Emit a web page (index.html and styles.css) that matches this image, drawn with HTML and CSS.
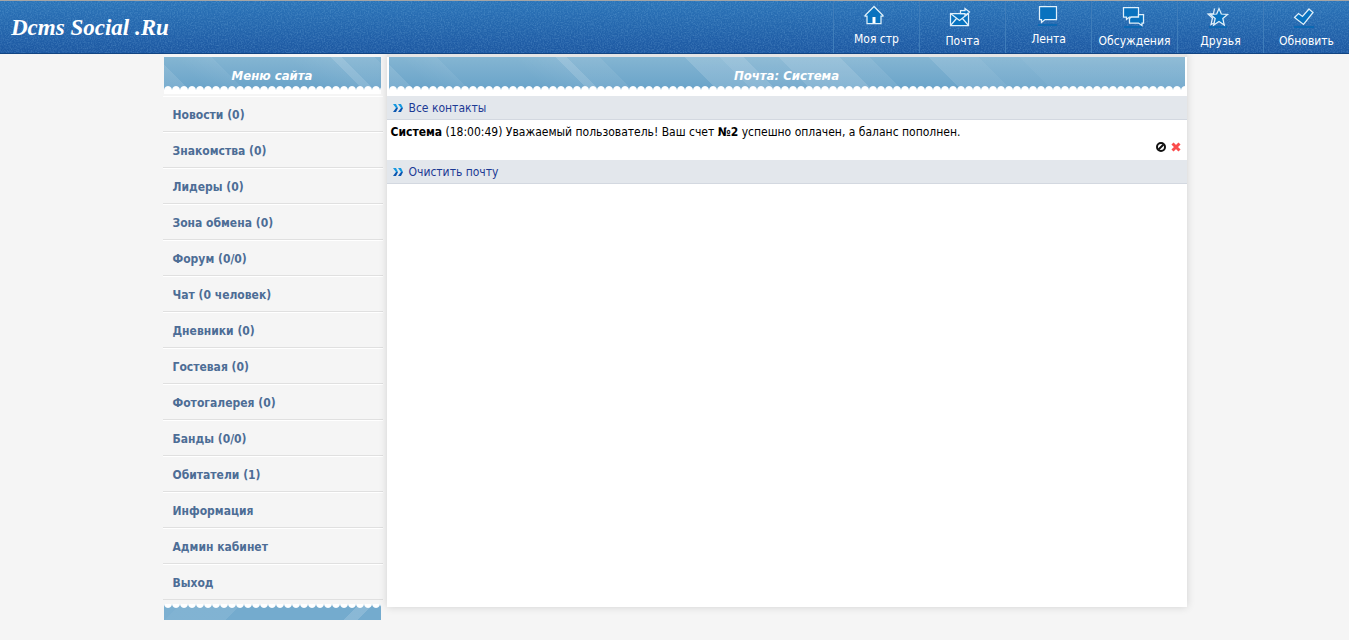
FILE: index.html
```html
<!DOCTYPE html>
<html lang="ru">
<head>
<meta charset="utf-8">
<title>Почта: Система</title>
<link rel="stylesheet" href="styles.css">
</head>
<body>
<header class="topbar">
  <svg class="grain" aria-hidden="true"><filter id="grain"><feTurbulence type="fractalNoise" baseFrequency="0.7" numOctaves="2" seed="4"/><feColorMatrix values="0 0 0 0 .35  0 0 0 0 .65  0 0 0 0 .9  1.6 0 0 0 -.62"/></filter><rect width="100%" height="100%" filter="url(#grain)"/></svg>
  <a class="logo" href="#">Dcms Social .Ru</a>
  <nav class="topnav">
    <a class="tab" href="#"><svg class="icon" viewBox="0 0 24 20"><path class="fill" d="M12 1.500 3 10.500V11h2v7.500h14V11h2v-.5z"/><path class="door" d="M10.500 12h3v6h-3z"/></svg><span>Моя стр</span></a>
    <a class="tab low" href="#"><svg class="icon" viewBox="0 0 24 20"><path class="fill" d="M2.500 6.500h18v12h-18z"/><path class="line" d="m2.500 6.500 9 7 9-7M2.500 18.500l6-7M20.500 18.500l-6-7"/><path class="fill" d="M12.500 3.500h4.500v-2l4.500 3.500-4.500 3.500v-2h-4.500z"/></svg><span>Почта</span></a>
    <a class="tab" href="#"><svg class="icon" viewBox="0 0 24 20"><path class="base" d="M4 20h19"/><path class="fill" d="M5.500 1.500h17v13h-11.500L7.500 17.500v-3h-2z"/></svg><span>Лента</span></a>
    <a class="tab low" href="#"><svg class="icon" viewBox="0 0 24 20"><path class="base" d="M4 20h18"/><path class="fill" d="M3.500 0.500h15v9.500H9.500L6.500 12.500V10h-3z"/><path class="fill" d="M18.500 7.500h5v8.500h-1.500v2.500l-3.500-2.500h-9v-4.500l2-1.500h7z"/></svg><span>Обсуждения</span></a>
    <a class="tab low" href="#"><svg class="icon" viewBox="0 0 24 20"><path class="base" d="M3 20h18"/><path class="line" d="m8.500 1.500-1 5-5.500.5 4.500 4-1.500 6.500 3-1.500"/><path class="fill" d="m13 1.500 2.300 5.500 6.200.500-4.700 4 1.500 6.500-5.300-3.500-5.300 3.500 1.500-6.500L4.500 7.500 10.700 7z"/></svg><span>Друзья</span></a>
    <a class="tab low" href="#"><svg class="icon" viewBox="0 0 24 20"><path class="base" d="M2 20h20"/><path class="fill" d="M17 2 21 5.500 11.500 17.500 2.500 10.500 6.500 6.500 10.500 9.500z"/></svg><span>Обновить</span></a>
  </nav>
</header>
<div class="page">
  <aside class="side">
    <h2 class="banner">Меню сайта</h2>
    <nav class="menu">
      <a href="#">Новости (0)</a>
      <a href="#">Знакомства (0)</a>
      <a href="#">Лидеры (0)</a>
      <a href="#">Зона обмена (0)</a>
      <a href="#">Форум (0/0)</a>
      <a href="#">Чат (0 человек)</a>
      <a href="#">Дневники (0)</a>
      <a href="#">Гостевая (0)</a>
      <a href="#">Фотогалерея (0)</a>
      <a href="#">Банды (0/0)</a>
      <a href="#">Обитатели (1)</a>
      <a href="#">Информация</a>
      <a href="#">Админ кабинет</a>
      <a href="#">Выход</a>
    </nav>
    <div class="side-foot"></div>
  </aside>
  <main class="content">
    <h1 class="banner">Почта: Система</h1>
    <a class="row" href="#"><svg class="chev" viewBox="0 0 10 10"><path class="hi" d="M0 1h3l2 4H3zM5 1h3l2 4H8z"/><path class="lo" d="M0 9h3l2-4H3zM5 9h3l2-4H8z"/></svg>Все контакты</a>
    <article class="message">
      <p><b>Система</b> (18:00:49) Уважаемый пользователь! Ваш счет <b>№2</b> успешно оплачен, а баланс пополнен.</p>
      <div class="actions">
        <button type="button" aria-label="Заблокировать"><svg viewBox="0 0 10 10"><circle class="ban" cx="5" cy="5" r="4"/><path class="ban" d="m2.500 7.500 5-5"/></svg></button>
        <button type="button" aria-label="Удалить"><svg viewBox="0 0 10 10"><path class="cross" d="m1.500 1.500 7 7M8.500 1.500l-7 7"/></svg></button>
      </div>
    </article>
    <a class="row" href="#"><svg class="chev" viewBox="0 0 10 10"><path class="hi" d="M0 1h3l2 4H3zM5 1h3l2 4H8z"/><path class="lo" d="M0 9h3l2-4H3zM5 9h3l2-4H8z"/></svg>Очистить почту</a>
  </main>
</div>
</body>
</html>
```
FILE: styles.css
```css
* { box-sizing: border-box; }
body {
  margin: 0;
  background: #f5f5f5;
  font: 12px/16px Tahoma, "DejaVu Sans Condensed", "Noto Sans", sans-serif;
  color: #000;
}
a { text-decoration: none; }
h1, h2, p { margin: 0; }

.topbar {
  position: relative;
  display: flex;
  justify-content: space-between;
  height: 54px;
  border-top: 1px solid #a5a5a5;
  border-bottom: 1px solid #124582;
  background: linear-gradient(#2b74b8, #1d58a2);
}
.grain { position: absolute; inset: 0; width: 100%; height: 100%; opacity: .3; }
.logo {
  position: relative;
  padding: 12px 11px;
  font: italic bold 23px/30px "Liberation Serif", "Times New Roman", serif;
  color: #fff;
}
.topnav { position: relative; display: flex; }
.tab {
  display: flex;
  flex-direction: column;
  align-items: center;
  gap: 6px;
  width: 86px;
  padding-top: 4px;
  border-left: 1px solid #3f7dba;
  line-height: 16px;
  color: #fff;
  white-space: nowrap;
}
.tab.low { padding-top: 6px; }
.icon { width: 24px; height: 20px; margin-right: 5px; overflow: visible; }
.fill { fill: #0872bf; stroke: #e0f0fa; stroke-width: 1.25; }
.line { fill: none; stroke: #e0f0fa; stroke-width: 1.25; }
.door { fill: #fff; }
.base { stroke: #0b68b3; stroke-width: 2; }

.page {
  display: flex;
  justify-content: center;
  align-items: flex-start;
  gap: 4px;
}
.side { width: 220px; padding-top: 3px; }
.banner {
  height: 33px;
  margin: 0 2px 0 1px;
  padding-top: 11px;
  background:
    radial-gradient(ellipse 4px 4px at 4px 4px, #fff 85%, transparent 110%) 0 29px / 8px 4px repeat-x,
    linear-gradient(45deg, #ffffff1c 18px, transparent 18px 30px, #ffffff10 57px, transparent 57px 110px, #ffffff10 141px, #ffffff30 141px 149px, #ffffff12 149px, #ffffff12 172px, transparent 172px 232px, #ffffff24 232px 257px, #ffffff34 257px 274px, #ffffff18 274px 299px, #ffffff30 299px 342px, #ffffff14 342px 363px, transparent 363px 405px, #ffffff1c 405px 440px, #ffffff10 440px 469px, #ffffff18 469px),
    linear-gradient(#84b5d2, #69a3c9);
  font: italic bold 13px/16px "Comic Sans MS", "DejaVu Sans Condensed", sans-serif;
  color: #fff;
  text-align: center;
}
.menu { margin-top: 6px; }
.side .banner { box-shadow: 0 4px #fff; }
.menu a {
  display: block;
  height: 36px;
  padding: 10px;
  border-top: 1px solid #fff;
  border-bottom: 1px solid #e0e0e0;
  line-height: 16px;
  font-weight: bold;
  color: #4d6d96;
}
.side-foot {
  height: 16px;
  margin: 4px 2px 0 1px;
  background:
    radial-gradient(ellipse 4px 4px at 4px 0, #fff 85%, transparent 110%) 0 0 / 8px 4px repeat-x,
    linear-gradient(135deg, #ffffff10 12px, #ffffff18 12px 55px, transparent 55px 138px, #ffffff28 138px 148px, transparent 148px),
    #74abce;
}

.content {
  flex: 0 1 800px;
  min-height: 553px;
  padding-top: 3px;
  background: linear-gradient(#e5e5e5 3px, #fff 3px);
  box-shadow: 0 0 8px #00000026;
}
.content .banner { margin: 0 2px 6px; }
.row {
  display: flex;
  align-items: center;
  gap: 6px;
  height: 24px;
  padding: 0 6px;
  border-bottom: 1px solid #d3d8e0;
  background: #e3e7ec;
  color: #1c3a94;
}
.chev { width: 10px; height: 10px; }
.hi { fill: #1598e0; }
.lo { fill: #0a56b0; }
.message { padding: 4px; }
.actions {
  display: flex;
  justify-content: flex-end;
  gap: 5px;
  padding: 2px 2px 4px;
}
.actions button {
  width: 10px;
  height: 10px;
  padding: 0;
  border: 0;
  background: none;
}
.actions svg { display: block; }
.ban { fill: none; stroke: #111; stroke-width: 2; }
.cross { stroke: #fb4c4c; stroke-width: 3; }
```
